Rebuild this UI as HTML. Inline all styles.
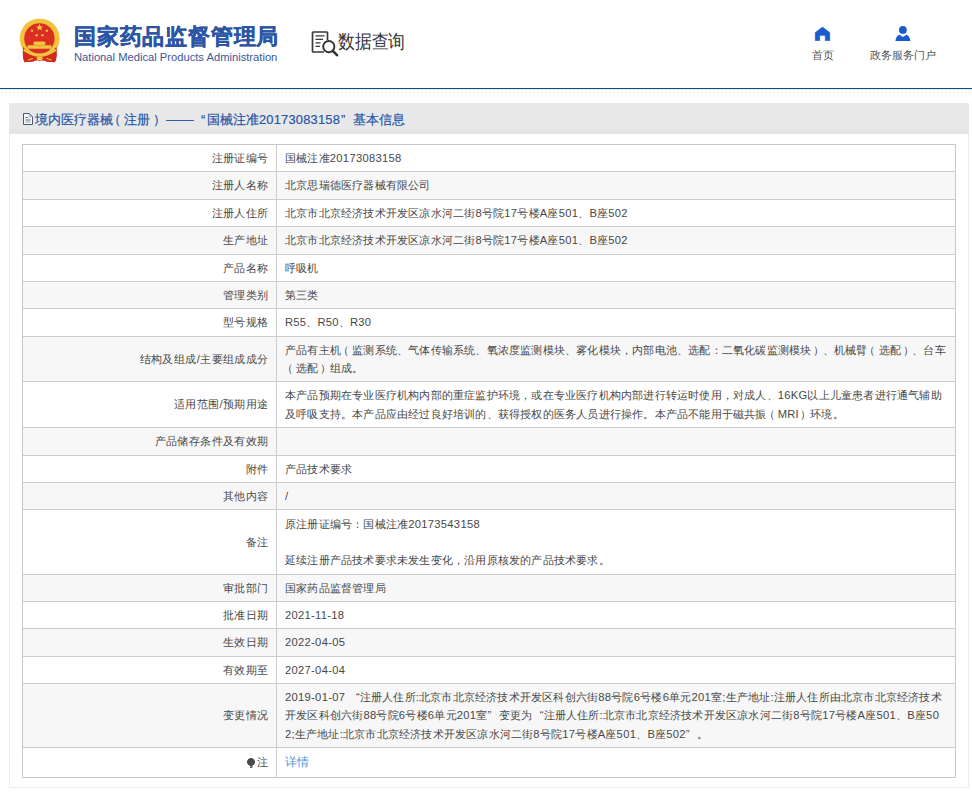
<!DOCTYPE html>
<html><head><meta charset="utf-8">
<style>
*{margin:0;padding:0;box-sizing:border-box}
html,body{width:972px;height:794px;overflow:hidden;background:#fff}
body{position:relative;text-spacing-trim:space-all;font-family:"Liberation Sans",sans-serif;color:#333}
.abs{position:absolute}
#emblem{left:16px;top:14px;width:48px;height:52px}
#t1{left:74px;top:21px;font-size:22.4px;font-weight:bold;color:#2d55a5;white-space:nowrap;line-height:32px;letter-spacing:0.8px;-webkit-text-stroke:0.3px #2d55a5}
#t2{left:74px;top:50px;font-size:11.2px;color:#3b5797;white-space:nowrap;line-height:14px}
#qicon{left:311px;top:31px;width:28px;height:27px}
#qtext{left:338px;top:30px;font-size:18.6px;color:#333;white-space:nowrap;line-height:24px;transform:scaleX(0.885);transform-origin:0 0}
#home{left:814px;top:26px;width:17px;height:15px}
#hometext{left:811.5px;top:47.5px;font-size:11.2px;color:#555;line-height:14px;white-space:nowrap}
#user{left:894px;top:25px;width:18px;height:17px}
#usertext{left:869.7px;top:47.5px;font-size:11.2px;color:#555;line-height:14px;white-space:nowrap}
#line{left:0;top:88px;width:972px;height:1px;background:#1c4b82}
#line2{left:0;top:89px;width:972px;height:1px;background:#dcf2fb}
#hatch{left:0;top:90px;width:972px;height:5px}
#box{left:9px;top:103px;width:960px;height:685px;border:1px solid #ececec;border-top:none}
#bar{left:9px;top:103px;width:960px;height:30.5px;background:linear-gradient(#e8e8e8 0 26px,#e5e5e5 26px)}
.bt{top:111px;font-size:12.9px;color:#2456a8;-webkit-text-stroke:0.2px #2456a8;white-space:nowrap;line-height:17px}
#tbl{left:22px;top:144px;width:934px;height:634px;border:1px solid #c8c8c8}
.row{position:absolute;left:22px;width:934px;letter-spacing:0.2px;border-top:1px solid #cccccc;font-size:11.2px;line-height:18.3px;color:#484848}
.row.g{background:#f7f7f7}
.row .l{position:absolute;left:0;top:0;width:255px;height:100%;text-align:right;padding-right:7.3px;letter-spacing:0.42px;border-right:1px solid #cccccc;display:flex;align-items:center;justify-content:flex-end}
.row .v{position:absolute;left:263px;top:0;right:0;height:100%;padding-left:0;display:flex;align-items:center;white-space:nowrap}
.n{letter-spacing:0.2px}
.row .n{letter-spacing:0.3px}
.lp{position:relative;left:-3px}
.rp{position:relative;left:1.5px}
.qo{display:inline-block;width:11.2px;text-align:right;letter-spacing:0}
.qc{display:inline-block;width:11.2px;text-align:left;letter-spacing:0}
.lnk{color:#4d92d8;font-size:11.7px;letter-spacing:0}
.bulb{display:inline-block;width:8px;height:10px;margin-right:2px;vertical-align:-1px;background:radial-gradient(circle at 50% 40%,#4a4a4a 0 3.7px,transparent 4px),linear-gradient(#777,#777) 2.7px 8px/2.6px 2px no-repeat}
</style></head><body>

<svg id="emblem" class="abs" viewBox="16 14 48 52">
  <path d="M24 48 Q21.5 57 24.5 62.3 L33 61.5 Q37 59.5 39.7 60.5 Q42.5 59.5 46.5 61.5 L55 62.3 Q58 57 55.5 48 Z" fill="#d42a1e"/>
  <circle cx="39.7" cy="38.4" r="20" fill="#f2c33c"/>
  <circle cx="39.4" cy="38.4" r="15.2" fill="#dc2d22"/>
  <path d="M23 47 Q22 56 24.5 62 L33 61.5 Q37 59.5 39.7 60.5 Q42.5 59.5 46.5 61.5 L55 62 Q57.5 56 56.5 47 Q48 55 39.7 55 Q31.5 55 23 47Z" fill="#d42a1e"/>
  <path d="M24 49.5 Q39.7 61 55.5 49.5" fill="none" stroke="#f2c33c" stroke-width="3"/>
  <rect x="27.5" y="45.3" width="24" height="3.4" rx="1" fill="#f2c33c"/>
  <rect x="33.4" y="41.5" width="12" height="3.5" rx="1.5" fill="#f2c33c"/>
  <ellipse cx="39.7" cy="58.2" rx="3" ry="2" fill="#f2c33c"/>
  <path d="M28 60 L33 58.5 M51.5 60 L46.5 58.5" stroke="#f2c33c" stroke-width="1.2"/>
  <polygon points="39.6,23.8 40.6,26.4 43.3,26.4 41.1,28 41.9,30.6 39.6,29 37.3,30.6 38.1,28 35.9,26.4 38.6,26.4" fill="#f6d050"/>
  <circle cx="32" cy="30.7" r="1.3" fill="#f0b840"/>
  <circle cx="46.8" cy="30.7" r="1.3" fill="#f0b840"/>
  <circle cx="36.6" cy="35.3" r="1.3" fill="#f0b840"/>
  <circle cx="42.5" cy="35.3" r="1.3" fill="#f0b840"/>
</svg>
<div id="t1" class="abs">国家药品监督管理局</div>
<div id="t2" class="abs">National Medical Products Administration</div>

<svg id="qicon" class="abs" viewBox="0 0 28 27">
  <path d="M13 21 H2.2 Q1.5 21 1.5 20.3 V1.7 Q1.5 1 2.2 1 H15.8 Q16.5 1 16.5 1.7 V9" fill="none" stroke="#3a3a3a" stroke-width="1.7"/>
  <path d="M4.5 4.8 H13.5 M4.5 8.3 H12 M4.5 11.8 H9.5 M4.5 15.3 H9" stroke="#3a3a3a" stroke-width="1.3"/>
  <circle cx="17.8" cy="15.6" r="5.6" fill="none" stroke="#333" stroke-width="1.9"/>
  <path d="M21.8 19.8 L26 24.2" stroke="#333" stroke-width="2.6" stroke-linecap="round"/>
</svg>
<div id="qtext" class="abs">数据查询</div>

<svg id="home" class="abs" viewBox="0 0 17 15">
  <path d="M8.5 1 L15.8 6.5 V14.8 H11.2 V9.6 H5.8 V14.8 H1.2 V6.5Z" fill="#1a5ccc" stroke="#1a5ccc" stroke-width="0.4" stroke-linejoin="round"/>
</svg>
<div id="hometext" class="abs">首页</div>
<svg id="user" class="abs" viewBox="0 0 18 17">
  <circle cx="8.9" cy="4.9" r="3.9" fill="#1a5ccc"/>
  <path d="M1.4 16.1 Q2 10.5 5.5 9.7 L8.9 12 L12.3 9.7 Q15.8 10.5 16.4 16.1 Z" fill="#1a5ccc"/>
</svg>
<div id="usertext" class="abs">政务服务门户</div>

<div id="line" class="abs"></div>
<div id="line2" class="abs"></div>
<svg id="hatch" class="abs" width="972" height="5"><defs><pattern id="hp" width="4" height="5" patternUnits="userSpaceOnUse"><path d="M0.8 3.8 L3 0.8" stroke="#efe2dc" stroke-width="0.8"/></pattern></defs><rect width="972" height="5" fill="url(#hp)"/></svg>

<div id="box" class="abs"></div>
<div id="bar" class="abs"></div>
<svg id="doc" class="abs" style="left:23px;top:113px;width:10px;height:12px" viewBox="0 0 10 12"><path d="M0.5 0.5 H6.3 L9.5 3.7 V11.5 H0.5Z" fill="#f4f7fb" stroke="#4b5775" stroke-width="1"/><path d="M6.3 0.5 V3.7 H9.5" fill="none" stroke="#8090b0" stroke-width="0.8"/><path d="M2.5 4.5 H5 M2.5 7 H7.5" stroke="#4b5775" stroke-width="0.9"/><path d="M2.5 9 H7.5" stroke="#a0a8b8" stroke-width="1"/></svg>
<div class="abs bt" style="left:34.5px">境内医疗器械<span class="lp" style="left:-5px">（</span><span style="position:relative;left:-1.5px">注册</span><span class="rp">）</span></div>
<div class="abs" style="left:166px;top:120px;width:28px;height:1px;background:#2a5fb0"></div>
<div class="abs bt" style="left:201px">“</div>
<div class="abs bt" style="left:207px">国械注准<span class="n">20173083158</span></div>
<div class="abs bt" style="left:341px">”</div>
<div class="abs bt" style="left:352.5px">基本信息</div>

<div id="rows">
<div class="row" style="top:144px;height:27px"><div class="l">注册证编号</div><div class="v"><div>国械注准<span class="n">20173083158</span></div></div></div>
<div class="row g" style="top:171px;height:28px"><div class="l">注册人名称</div><div class="v"><div>北京思瑞德医疗器械有限公司</div></div></div>
<div class="row" style="top:199px;height:27px"><div class="l">注册人住所</div><div class="v"><div>北京市北京经济技术开发区凉水河二街<span class="n">8</span>号院<span class="n">17</span>号楼A座<span class="n">501</span>、B座<span class="n">502</span></div></div></div>
<div class="row g" style="top:226px;height:28px"><div class="l">生产地址</div><div class="v"><div>北京市北京经济技术开发区凉水河二街<span class="n">8</span>号院<span class="n">17</span>号楼A座<span class="n">501</span>、B座<span class="n">502</span></div></div></div>
<div class="row" style="top:254px;height:27px"><div class="l">产品名称</div><div class="v"><div>呼吸机</div></div></div>
<div class="row g" style="top:281px;height:27px"><div class="l">管理类别</div><div class="v"><div>第三类</div></div></div>
<div class="row" style="top:308px;height:28px"><div class="l">型号规格</div><div class="v"><div>R<span class="n">55</span>、R<span class="n">50</span>、R<span class="n">30</span></div></div></div>
<div class="row g" style="top:336px;height:45px"><div class="l">结构及组成/主要组成成分</div><div class="v"><div>产品有主机<span class="lp">（</span>监测系统、气体传输系统、氧浓度监测模块、雾化模块，内部电池、选配：二氧化碳监测模块<span class="rp">）</span>、机械臂<span class="lp">（</span>选配<span class="rp">）</span>、台车<br><span class="lp">（</span>选配<span class="rp">）</span>组成。</div></div></div>
<div class="row" style="top:381px;height:46px"><div class="l">适用范围/预期用途</div><div class="v"><div>本产品预期在专业医疗机构内部的重症监护环境，或在专业医疗机构内部进行转运时使用，对成人、<span class="n">16</span>KG以上儿童患者进行通气辅助<br>及呼吸支持。本产品应由经过良好培训的、获得授权的医务人员进行操作。本产品不能用于磁共振<span class="lp">（</span>MRI<span class="rp">）</span>环境。</div></div></div>
<div class="row g" style="top:427px;height:28px"><div class="l">产品储存条件及有效期</div><div class="v"><div></div></div></div>
<div class="row" style="top:455px;height:27px"><div class="l">附件</div><div class="v"><div>产品技术要求</div></div></div>
<div class="row g" style="top:482px;height:27px"><div class="l">其他内容</div><div class="v"><div>/</div></div></div>
<div class="row" style="top:509px;height:65px"><div class="l">备注</div><div class="v"><div>原注册证编号：国械注准<span class="n">20173543158</span><br><br>延续注册产品技术要求未发生变化，沿用原核发的产品技术要求。</div></div></div>
<div class="row g" style="top:574px;height:27px"><div class="l">审批部门</div><div class="v"><div>国家药品监督管理局</div></div></div>
<div class="row" style="top:601px;height:27px"><div class="l">批准日期</div><div class="v"><div><span class="n">2021-11-18</span></div></div></div>
<div class="row g" style="top:628px;height:28px"><div class="l">生效日期</div><div class="v"><div><span class="n">2022-04-05</span></div></div></div>
<div class="row" style="top:656px;height:27px"><div class="l">有效期至</div><div class="v"><div><span class="n">2027-04-04</span></div></div></div>
<div class="row g" style="top:683px;height:64px"><div class="l">变更情况</div><div class="v"><div><span class="n">2019-01-07</span> <span class="qo">“</span>注册人住所:北京市北京经济技术开发区科创六街<span class="n">88</span>号院<span class="n">6</span>号楼<span class="n">6</span>单元<span class="n">201</span>室;生产地址:注册人住所由北京市北京经济技术<br>开发区科创六街<span class="n">88</span>号院<span class="n">6</span>号楼<span class="n">6</span>单元<span class="n">201</span>室<span class="qc">”</span>变更为<span class="qo">“</span>注册人住所:北京市北京经济技术开发区凉水河二街<span class="n">8</span>号院<span class="n">17</span>号楼A座<span class="n">501</span>、B座<span class="n">50</span><br><span class="n">2</span>;生产地址:北京市北京经济技术开发区凉水河二街<span class="n">8</span>号院<span class="n">17</span>号楼A座<span class="n">501</span>、B座<span class="n">502</span><span class="qc">”</span>。</div></div></div>
<div class="row" style="top:747px;height:30px"><div class="l"><span class="bulb"></span>注</div><div class="v"><div><span class="lnk">详情</span></div></div></div>
</div>
<div id="tbl" class="abs"></div>
</body></html>
